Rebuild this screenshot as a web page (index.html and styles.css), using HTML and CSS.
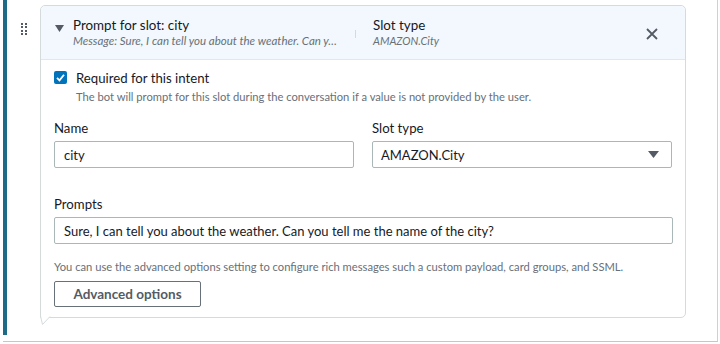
FILE: index.html
```html
<!DOCTYPE html>
<html lang="en">
  <head>
    <meta charset="UTF-8" />
    <meta name="viewport" content="width=device-width, initial-scale=1.0" />
    <title>Slot prompt</title>
    <link rel="stylesheet" href="styles.css">
  </head>
  <body>
    <div class="slot-row">
      <div class="accent"></div>
      <div class="handle-col">
        <span class="drag-handle">
          <i></i><i></i><i></i><i></i><i></i><i></i><i></i><i></i>
        </span>
      </div>
      <div class="card">
        <div class="card-header">
          <svg class="caret" width="9" height="7" viewBox="0 0 9 7"><polygon points="0,0 9,0 4.5,7" fill="#545b64"/></svg>
          <div class="head-col head-main">
            <div class="head-title">Prompt for slot: city</div>
            <div class="head-sub message">Message: Sure, I can tell you about the weather. Can y…</div>
          </div>
          <span class="head-sep"></span>
          <div class="head-col head-type">
            <div class="head-title">Slot type</div>
            <div class="head-sub">AMAZON.City</div>
          </div>
          <svg class="close" width="12" height="12" viewBox="0 0 12 12"><path d="M1 1 L11 11 M11 1 L1 11" stroke="#545b64" stroke-width="1.8" fill="none"/></svg>
        </div>

        <div class="card-body">
          <div class="check-row">
            <span class="checkbox">
              <svg width="13" height="13" viewBox="0 0 13 13"><path d="M3 6.8 L5.5 9.3 L10 3.8" stroke="#fff" stroke-width="1.8" fill="none"/></svg>
            </span>
            <div>
              <div class="check-title">Required for this intent</div>
              <div class="check-desc">The bot will prompt for this slot during the conversation if a value is not provided by the user.</div>
            </div>
          </div>

          <div class="field-grid">
            <div class="field">
              <label class="field-label">Name</label>
              <div class="input">city</div>
            </div>
            <div class="field">
              <label class="field-label">Slot type</label>
              <div class="input select">
                AMAZON.City
                <svg width="11" height="7" viewBox="0 0 11 7"><polygon points="0,0 11,0 5.5,7" fill="#545b64"/></svg>
              </div>
            </div>
          </div>

          <div class="field prompts">
            <label class="field-label">Prompts</label>
            <div class="input">Sure, I can tell you about the weather. Can you tell me the name of the city?</div>
          </div>

          <p class="help">You can use the advanced options setting to configure rich messages such a custom payload, card groups, and SSML.</p>
          <button class="btn">Advanced options</button>
        </div>
        <svg class="tail" width="12" height="10" viewBox="0 0 12 10"><path d="M0.5 0 L2.5 8.5 L10 0.5" stroke="#d5dbdb" stroke-width="1" fill="#fff"/></svg>
      </div>
    </div>
  </body>
</html>
```

FILE: styles.css
```css
body {
  margin: 0;
  background: #fff;
  color: #16191f;
  font-family: Lato, "Open Sans", sans-serif;
}
.slot-row {
  display: flex;
  align-items: flex-start;
  margin-left: 3px;
  width: 714px;
  height: 341px;
  border-right: 1px solid #d0d0d0;
  border-bottom: 1px solid #c6c6c6;
}
.accent {
  width: 4px;
  height: 335px;
  background-color: #1d6b86;
}
.handle-col {
  width: 33px;
  padding-top: 23px;
}
.drag-handle {
  display: grid;
  grid-template-columns: 2px 2px;
  column-gap: 2px;
  row-gap: 1.4px;
  margin-left: 14px;
  width: 6px;
}
.drag-handle i {
  width: 2px;
  height: 2px;
  background: #545b64;
}
.card {
  position: relative;
  width: 644px;
  height: 311px;
  margin-top: 5px;
  border: 1px solid #d5dbdb;
  border-radius: 5px 5px 5px 0;
}
.card-header {
  display: flex;
  align-items: flex-start;
  height: 54px;
  padding: 10px 0 0 14px;
  box-sizing: border-box;
  background-color: #f2f8fd;
  border-bottom: 1px solid #e3e7ea;
  border-radius: 5px 5px 0 0;
}
.caret {
  margin-top: 9px;
  margin-right: 9px;
}
.head-col {
  min-width: 0;
}
.head-main {
  width: 266px;
}
.head-type {
  width: 250px;
}
.head-title {
  font-size: 13.4px;
  line-height: 18px;
  white-space: nowrap;
}
.head-sub {
  font-size: 11px;
  line-height: 14px;
  font-style: italic;
  color: #687078;
  white-space: nowrap;
}
.message {
  font-size: 11.5px;
}
.head-sep {
  width: 1px;
  height: 8px;
  margin: 14px 17px 0 16px;
  background: #d5dbdb;
}
.close {
  margin-top: 12px;
  margin-left: 23px;
}
.card-body {
  padding: 9px 12px 0 13px;
}
.check-row {
  display: flex;
  gap: 9px;
}
.checkbox {
  display: block;
  width: 13px;
  height: 13px;
  margin-top: 2px;
  background: #0073bb;
  border-radius: 2px;
}
.checkbox svg {
  display: block;
}
.check-title {
  font-size: 13.2px;
  line-height: 18px;
}
.check-desc {
  margin-top: 2px;
  font-size: 11.2px;
  line-height: 16px;
  color: #687078;
}
.field-grid {
  display: grid;
  grid-template-columns: 300px 300px;
  column-gap: 18px;
  margin-top: 14px;
}
.field-label {
  display: block;
  font-size: 13.2px;
  line-height: 18px;
  margin-bottom: 4px;
}
.input {
  display: flex;
  align-items: center;
  height: 27px;
  box-sizing: border-box;
  padding: 0 8px 0 9px;
  border: 1px solid #aab7b8;
  border-radius: 2px;
  font-size: 13px;
}
.select {
  justify-content: space-between;
  padding-left: 8px;
  padding-right: 12px;
}
.prompts {
  margin-top: 27px;
}
.help {
  margin: 15px 0 0;
  font-size: 11.2px;
  line-height: 16px;
  color: #687078;
}
.btn {
  display: block;
  margin-top: 6px;
  width: 147px;
  height: 26px;
  background: #fff;
  border: 1px solid #687078;
  border-radius: 2px;
  color: #545b64;
  font-family: inherit;
  font-size: 13.5px;
  font-weight: bold;
  cursor: pointer;
}
.tail {
  position: absolute;
  left: -1px;
  bottom: -9px;
}
```
